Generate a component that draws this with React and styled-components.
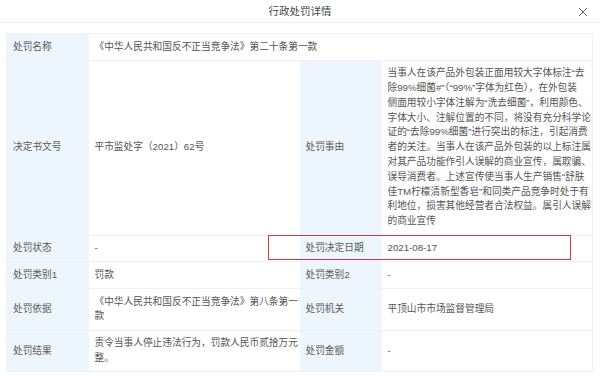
import React from "react";
import styled, { createGlobalStyle } from "styled-components";

const GlobalStyle = createGlobalStyle`
  html, body {
    margin: 0;
    padding: 0;
    background: #fff;
  }
  body {
    font-family: "Liberation Sans", "Noto Sans CJK SC", sans-serif;
  }
`;

const Dialog = styled.div`
  width: 600px;
  height: 376px;
  background: #fff;
  overflow: hidden;
`;

const Header = styled.div`
  position: relative;
  height: 23px;
  display: flex;
  align-items: center;
  justify-content: center;
  border-bottom: 1px solid #eef0f2;
  box-sizing: border-box;
`;

const Title = styled.h2`
  margin: 0;
  font-size: 10.5px;
  font-weight: normal;
  color: #444;
  line-height: 14px;
`;

const Close = styled.button`
  position: absolute;
  right: 11px;
  top: 6px;
  width: 12px;
  height: 12px;
  padding: 0;
  border: 0;
  background: none;
  display: flex;
  align-items: center;
  justify-content: center;
`;

const Body = styled.div`
  padding: 10px 8px 0 6px;
`;

const TableWrap = styled.div`
  position: relative;
`;

const Table = styled.table`
  width: 586px;
  border-collapse: collapse;
  table-layout: fixed;
  border: 1px solid #f0f2f5;
  font-size: 9.7px;
  line-height: 14.8px;
  color: #555;
`;

const Cell = styled.td`
  padding: 5.5px 4px 5.5px 6px;
  vertical-align: middle;
  border-bottom: 1px solid #eef1f4;
  background: ${({ $label }) => ($label ? "#edf5fd" : "#fff")};
  color: ${({ $label }) => ($label ? "#5a5a5a" : "#555")};
  white-space: nowrap;
`;

const Line = styled.span`
  display: block;
`;

const Marker = styled.div`
  position: absolute;
  left: 262px;
  top: 202px;
  width: 303px;
  height: 25px;
  border: 1.5px solid #d8373d;
  box-sizing: border-box;
  pointer-events: none;
`;

function Lines({ items }) {
  return items.map((t, i) => <Line key={i}>{t}</Line>);
}

const reason = [
  "当事人在该产品外包装正面用较大字体标注“去",
  "除99%细菌#”（“99%”字体为红色），在外包装",
  "侧面用较小字体注解为“洗去细菌”，利用颜色、",
  "字体大小、注解位置的不同，将没有充分科学论",
  "证的“去除99%细菌”进行突出的标注，引起消费",
  "者的关注。当事人在该产品外包装的以上标注属",
  "对其产品功能作引人误解的商业宣传，属欺骗、",
  "误导消费者。上述宣传使当事人生产销售“舒肤",
  "佳TM柠檬清新型香皂”和同类产品竞争时处于有",
  "利地位，损害其他经营者合法权益。属引人误解",
  "的商业宣传",
];

function CloseIcon() {
  return (
    <svg width="10" height="10" viewBox="0 0 10 10">
      <path d="M1 1L9 9M9 1L1 9" stroke="#666" strokeWidth="1" fill="none" />
    </svg>
  );
}

export default function App() {
  return (
    <>
      <GlobalStyle />
      <Dialog>
        <Header>
          <Title>行政处罚详情</Title>
          <Close aria-label="关闭">
            <CloseIcon />
          </Close>
        </Header>
        <Body>
          <TableWrap>
            <Table>
              <colgroup>
                <col style={{ width: 82 }} />
                <col style={{ width: 211 }} />
                <col style={{ width: 82 }} />
                <col style={{ width: 211 }} />
              </colgroup>
              <tbody>
                <tr>
                  <Cell $label>处罚名称</Cell>
                  <Cell colSpan={3}>《中华人民共和国反不正当竞争法》第二十条第一款</Cell>
                </tr>
                <tr>
                  <Cell $label>决定书文号</Cell>
                  <Cell>平市监处字（2021）62号</Cell>
                  <Cell $label>处罚事由</Cell>
                  <Cell>
                    <Lines items={reason} />
                  </Cell>
                </tr>
                <tr>
                  <Cell $label>处罚状态</Cell>
                  <Cell>-</Cell>
                  <Cell $label>处罚决定日期</Cell>
                  <Cell>2021-08-17</Cell>
                </tr>
                <tr>
                  <Cell $label>处罚类别1</Cell>
                  <Cell>罚款</Cell>
                  <Cell $label>处罚类别2</Cell>
                  <Cell>-</Cell>
                </tr>
                <tr>
                  <Cell $label>处罚依据</Cell>
                  <Cell>
                    <Lines items={["《中华人民共和国反不正当竞争法》第八条第一", "款"]} />
                  </Cell>
                  <Cell $label>处罚机关</Cell>
                  <Cell>平顶山市市场监督管理局</Cell>
                </tr>
                <tr>
                  <Cell $label>处罚结果</Cell>
                  <Cell>
                    <Lines items={["责令当事人停止违法行为，罚款人民币贰拾万元", "整。"]} />
                  </Cell>
                  <Cell $label>处罚金额</Cell>
                  <Cell>-</Cell>
                </tr>
              </tbody>
            </Table>
            <Marker />
          </TableWrap>
        </Body>
      </Dialog>
    </>
  );
}
